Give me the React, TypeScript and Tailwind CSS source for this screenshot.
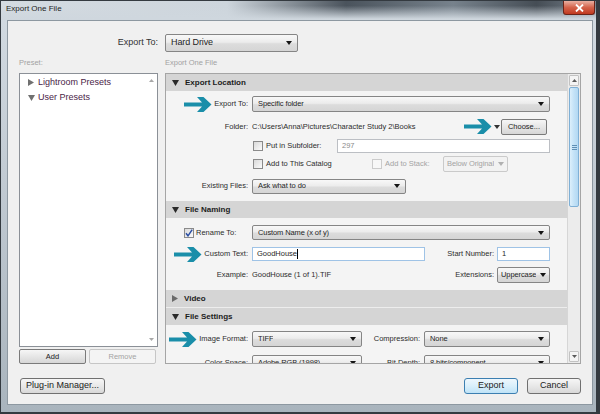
import React from "react";

const Caret = ({ color = "#151515" }: { color?: string }) => (
  <svg width="6" height="4" viewBox="0 0 6 4" className="shrink-0">
    <path d="M0 0h6L3 4z" fill={color} />
  </svg>
);

const Tri = ({ dir, color }: { dir: "down" | "right"; color: string }) =>
  dir === "down" ? (
    <svg width="7" height="6" viewBox="0 0 7 6" className="shrink-0">
      <path d="M0 0h7L3.5 6z" fill={color} />
    </svg>
  ) : (
    <svg width="6" height="7" viewBox="0 0 6 7" className="shrink-0">
      <path d="M0 0l6 3.5L0 7z" fill={color} />
    </svg>
  );

// teal annotation arrow
const Pointer = () => (
  <svg width="28" height="15" viewBox="0 0 28 15" className="shrink-0">
    <path d="M0 5.5h18L13 0h6.5l8 7.5-8 7.5H13l5-5.5H0z" fill="#1a8ea9" />
  </svg>
);

type DropProps = { text: string; className: string; disabled?: boolean; tight?: boolean };

const Dropdown = ({ text, className, disabled, tight }: DropProps) => (
  <div
    className={`flex shrink-0 items-center justify-between overflow-hidden rounded-[2px] border ${
      tight ? "pl-[3px] pr-[3px]" : "pl-[5px] pr-[5px]"
    } ${
      disabled
        ? "border-[#cacaca] bg-[#f2f2f2] text-[#a3a3a3]"
        : "border-[#858585] bg-[linear-gradient(to_bottom,#f8f8f8,#ececec_45%,#dcdcdc_55%,#d5d5d5)] text-[#1f1f1f]"
    } ${className}`}
  >
    <span className="overflow-hidden whitespace-nowrap tracking-[-0.1px]">{text}</span>
    <Caret color={disabled ? "#b0b0b0" : "#151515"} />
  </div>
);

type FieldProps = { text: string; className: string; focus?: boolean; muted?: boolean; cursor?: boolean };

const Field = ({ text, className, focus, muted, cursor }: FieldProps) => (
  <div
    className={`flex shrink-0 items-center border bg-white px-[4px] ${
      focus ? "border-[#9fc3e6]" : "border-[#bcbfc4]"
    } ${muted ? "text-[#8a8a8a]" : "text-[#1f1f1f]"} ${className}`}
  >
    <span>{text}</span>
    {cursor && <span className="h-[10px] w-px bg-black" />}
  </div>
);

const Check = ({ checked, disabled }: { checked?: boolean; disabled?: boolean }) => (
  <div
    className={`flex h-[10px] w-[10px] shrink-0 items-center justify-center border ${
      disabled
        ? "border-[#cbcbcb] bg-[#f7f7f7]"
        : "border-[#8a8a8a] bg-[linear-gradient(135deg,#d9d9d9,#fbfbfb)]"
    }`}
  >
    {checked && (
      <svg width="8" height="8" viewBox="0 0 8 8">
        <path d="M1 4.2l2 2.6L7.2 0.6" stroke="#2b4fa3" strokeWidth="1.5" fill="none" />
      </svg>
    )}
  </div>
);

const Header = ({ title, open }: { title: string; open?: boolean }) => (
  <div className="flex h-[17px] shrink-0 items-center gap-[6px] bg-[#d5d5d5] pl-[6px] text-[8px] font-bold text-[#1c1c1c]">
    <Tri dir={open ? "down" : "right"} color={open ? "#2a2a2a" : "#6a6a6a"} />
    <span>{title}</span>
  </div>
);

const Label = ({ children, arrow }: { children: React.ReactNode; arrow?: boolean }) => (
  <div className="flex w-[82px] shrink-0 items-center justify-end gap-[2px]">
    {arrow && <Pointer />}
    <span className="whitespace-nowrap">{children}</span>
  </div>
);

const App = () => {
  return (
    <div className="flex h-[414px] w-[600px] flex-col overflow-hidden border-b-2 border-l border-r-4 border-t border-[#343a40] bg-[linear-gradient(to_bottom,#d3dbe2,#c3ccd4_40%,#a9b4bd)] font-['Liberation_Sans',Arial,sans-serif] text-[#2c2c2c]">
      {/* title bar */}
      <div className="flex h-[19px] shrink-0 items-start justify-between bg-[linear-gradient(to_bottom,transparent_25%,#cfd7de_95%),linear-gradient(to_right,#d4dbe1_0%,#cdd5dc_38%,#4a535c_58%,#77828c_76%,#454d55_90%,#7a848e_100%)]">
        <span className="pl-[5px] pt-[4px] text-[8px] leading-none text-[#1e1e1e]">Export One File</span>
        <div className="mr-px flex h-[14px] w-[32px] items-center justify-center rounded-b-[3px] border border-t-0 border-[#6b2418] bg-[linear-gradient(to_bottom,#eab0a2,#d4624a_50%,#c0391f)]">
          <svg width="9" height="8" viewBox="0 0 9 8">
            <path d="M1 0.5l7 7M8 0.5l-7 7" stroke="#fff" strokeWidth="1.8" />
          </svg>
        </div>
      </div>

      <div className="flex flex-1 pb-[7px] pl-[6px] pr-[3px]">
        <div className="flex flex-1 flex-col border border-[#8d98a1] bg-[#f0f0f0] pl-[11px] pr-[11px] pt-[13px]">
          {/* Export To */}
          <div className="flex h-[18px] items-center gap-[7px] text-[9px]">
            <div className="w-[139px] text-right text-[#333]">Export To:</div>
            <Dropdown text="Hard Drive" className="h-[18px] w-[133px]" />
          </div>

          <div className="mt-[5px] flex h-[12px] items-center gap-[7px] text-[7.5px] text-[#a2a2a2]">
            <div className="w-[139px]">Preset:</div>
            <div>Export One File</div>
          </div>

          <div className="mt-[4px] flex gap-[7px]">
            {/* presets */}
            <div className="flex w-[139px] flex-col">
              <div className="flex h-[274px] border border-[#8b9097] bg-white">
                <div className="flex flex-1 flex-col pl-[8px] pt-px text-[9px] text-[#4a2447]">
                  <div className="flex h-[15px] items-center gap-[4px]">
                    <Tri dir="right" color="#707070" />
                    <span>Lightroom Presets</span>
                  </div>
                  <div className="flex h-[15px] items-center gap-[3px]">
                    <Tri dir="down" color="#707070" />
                    <span>User Presets</span>
                  </div>
                </div>
                <div className="mr-[3px] flex w-[6px] flex-col items-center justify-between py-[5px]">
                  <svg width="5" height="3" viewBox="0 0 5 3">
                    <path d="M0 3h5L2.5 0z" fill="#a8a8a8" />
                  </svg>
                  <svg width="5" height="3" viewBox="0 0 5 3">
                    <path d="M0 0h5L2.5 3z" fill="#a8a8a8" />
                  </svg>
                </div>
              </div>
              <div className="mt-[2px] flex h-[15px] gap-[3px] text-[7.5px]">
                <div className="flex w-[67px] items-center justify-center rounded-[2px] border border-[#7a7a7a] bg-[linear-gradient(to_bottom,#f6f6f6,#e6e6e6_50%,#d6d6d6)] text-[#222]">
                  Add
                </div>
                <div className="flex w-[67px] items-center justify-center rounded-[2px] border border-[#c6c6c6] bg-[#f4f4f4] text-[#a3a3a3]">
                  Remove
                </div>
              </div>
            </div>

            {/* settings panel */}
            <div className="flex h-[291px] w-[416px] overflow-hidden border border-[#a5a5a5] bg-[#f4f4f4]">
              <div className="flex flex-1 flex-col overflow-hidden text-[7.5px] text-[#2c2c2c]">
                <Header title="Export Location" open />
                <div className="flex shrink-0 flex-col pb-[7px] pt-[5px]">
                  <div className="flex h-[16px] items-center gap-[4px]">
                    <Label arrow>Export To:</Label>
                    <Dropdown text="Specific folder" className="h-[16px] w-[298px]" />
                  </div>
                  <div className="mt-[6px] flex h-[17px] items-center gap-[4px]">
                    <Label>Folder:</Label>
                    <div className="flex w-[298px] items-center">
                      <span className="flex-1 truncate">{"C:\\Users\\Anna\\Pictures\\Character Study 2\\Books"}</span>
                      <Pointer />
                      <div className="ml-[2px]">
                        <Caret color="#333" />
                      </div>
                      <div className="ml-px flex h-[16px] w-[46px] items-center justify-center rounded-[2px] border border-[#7a7a7a] bg-[linear-gradient(to_bottom,#f6f6f6,#e6e6e6_50%,#d6d6d6)] text-[#222]">
                        Choose...
                      </div>
                      <div className="w-[3px]" />
                    </div>
                  </div>
                  <div className="mt-[3px] flex h-[15px] items-center gap-[4px]">
                    <Label>{""}</Label>
                    <div className="flex w-[298px] items-center">
                      <div className="ml-px flex items-center gap-[3px]">
                        <Check />
                        <span>Put in Subfolder:</span>
                      </div>
                      <Field text="297" muted className="ml-auto h-[14px] w-[213px]" />
                    </div>
                  </div>
                  <div className="mt-[3px] flex h-[16px] items-center gap-[4px]">
                    <Label>{""}</Label>
                    <div className="flex w-[298px] items-center">
                      <div className="flex w-[120px] items-center gap-[3px] pl-px">
                        <Check />
                        <span>Add to This Catalog</span>
                      </div>
                      <div className="flex w-[71px] items-center gap-[3px] text-[#a3a3a3]">
                        <Check disabled />
                        <span>Add to Stack:</span>
                      </div>
                      <Dropdown text="Below Original" disabled tight className="h-[16px] w-[65px] gap-[2px]" />
                    </div>
                  </div>
                  <div className="mt-[6px] flex h-[16px] items-center gap-[4px]">
                    <Label>Existing Files:</Label>
                    <Dropdown text="Ask what to do" className="h-[15px] w-[154px]" />
                  </div>
                </div>

                <Header title="File Naming" open />
                <div className="flex shrink-0 flex-col pb-[7px] pt-[7px]">
                  <div className="flex h-[15px] items-center gap-[4px]">
                    <div className="flex w-[82px] shrink-0 items-center gap-[2px] pl-[18px]">
                      <Check checked />
                      <span>Rename To:</span>
                    </div>
                    <Dropdown text="Custom Name (x of y)" className="h-[15px] w-[298px]" />
                  </div>
                  <div className="mt-[7px] flex h-[14px] items-center gap-[4px]">
                    <Label arrow>Custom Text:</Label>
                    <div className="flex w-[298px] items-center">
                      <Field text="GoodHouse" focus cursor className="h-[14px] w-[173px]" />
                      <span className="flex-1 pr-[3px] text-right">Start Number:</span>
                      <Field text="1" focus className="h-[14px] w-[53px]" />
                    </div>
                  </div>
                  <div className="mt-[6px] flex h-[16px] items-center gap-[4px]">
                    <Label>Example:</Label>
                    <div className="flex w-[298px] items-center">
                      <span className="flex-1">GoodHouse (1 of 1).TIF</span>
                      <span className="pr-[3px]">Extensions:</span>
                      <Dropdown text="Uppercase" tight className="h-[16px] w-[53px] gap-[2px]" />
                    </div>
                  </div>
                </div>

                <Header title="Video" />
                <div className="h-px shrink-0 bg-[#ededed]" />
                <Header title="File Settings" open />
                <div className="flex shrink-0 flex-col pt-[6px]">
                  <div className="flex h-[16px] items-center gap-[4px]">
                    <Label arrow>Image Format:</Label>
                    <div className="flex w-[298px] items-center">
                      <Dropdown text="TIFF" className="h-[16px] w-[110px]" />
                      <span className="flex-1 pr-[4px] text-right">Compression:</span>
                      <Dropdown text="None" className="h-[16px] w-[126px]" />
                    </div>
                  </div>
                  <div className="mt-[8px] flex h-[16px] items-center gap-[4px]">
                    <Label>Color Space:</Label>
                    <div className="flex w-[298px] items-center">
                      <Dropdown text="Adobe RGB (1998)" className="h-[16px] w-[110px]" />
                      <span className="flex-1 pr-[4px] text-right">Bit Depth:</span>
                      <Dropdown text="8 bits/component" className="h-[16px] w-[126px]" />
                    </div>
                  </div>
                </div>
              </div>

              {/* scrollbar */}
              <div className="flex w-[13px] shrink-0 flex-col border-l border-[#d6d6d6] bg-[#ececec] px-px py-px">
                <div className="flex h-[11px] items-center justify-center rounded-[1px] border border-[#c2c2c2] bg-[#f4f4f4]">
                  <svg width="5" height="3" viewBox="0 0 5 3">
                    <path d="M0 3h5L2.5 0z" fill="#5a5a5a" />
                  </svg>
                </div>
                <div className="mt-px flex h-[120px] items-center justify-center rounded-[2px] border border-[#7fb0d6] bg-[linear-gradient(to_right,#dcefFB,#c3e2f7_50%,#b3d8f2)]">
                  <div className="flex w-[5px] flex-col gap-px">
                    <div className="h-px bg-[#5f8fb5]" />
                    <div className="h-px bg-[#5f8fb5]" />
                    <div className="h-px bg-[#5f8fb5]" />
                  </div>
                </div>
                <div className="mt-auto flex h-[11px] items-center justify-center rounded-[1px] border border-[#c2c2c2] bg-[#f4f4f4]">
                  <svg width="5" height="3" viewBox="0 0 5 3">
                    <path d="M0 0h5L2.5 3z" fill="#5a5a5a" />
                  </svg>
                </div>
              </div>
            </div>
          </div>

          {/* bottom buttons */}
          <div className="mt-[14px] flex h-[16px] items-center justify-between text-[9px] text-[#222]">
            <div className="ml-px flex h-[16px] w-[85px] items-center justify-center rounded-[3px] border border-[#707070] bg-[linear-gradient(to_bottom,#f6f6f6,#e8e8e8_50%,#d8d8d8)]">
              Plug-in Manager...
            </div>
            <div className="flex gap-[9px]">
              <div className="flex h-[16px] w-[54px] items-center justify-center rounded-[3px] border border-[#3c7fb1] bg-[linear-gradient(to_bottom,#eef7fd,#d9effb_50%,#bfe3f7)]">
                Export
              </div>
              <div className="flex h-[16px] w-[54px] items-center justify-center rounded-[3px] border border-[#707070] bg-[linear-gradient(to_bottom,#f6f6f6,#e8e8e8_50%,#d8d8d8)]">
                Cancel
              </div>
            </div>
          </div>
        </div>
      </div>
    </div>
  );
};

export default App;
